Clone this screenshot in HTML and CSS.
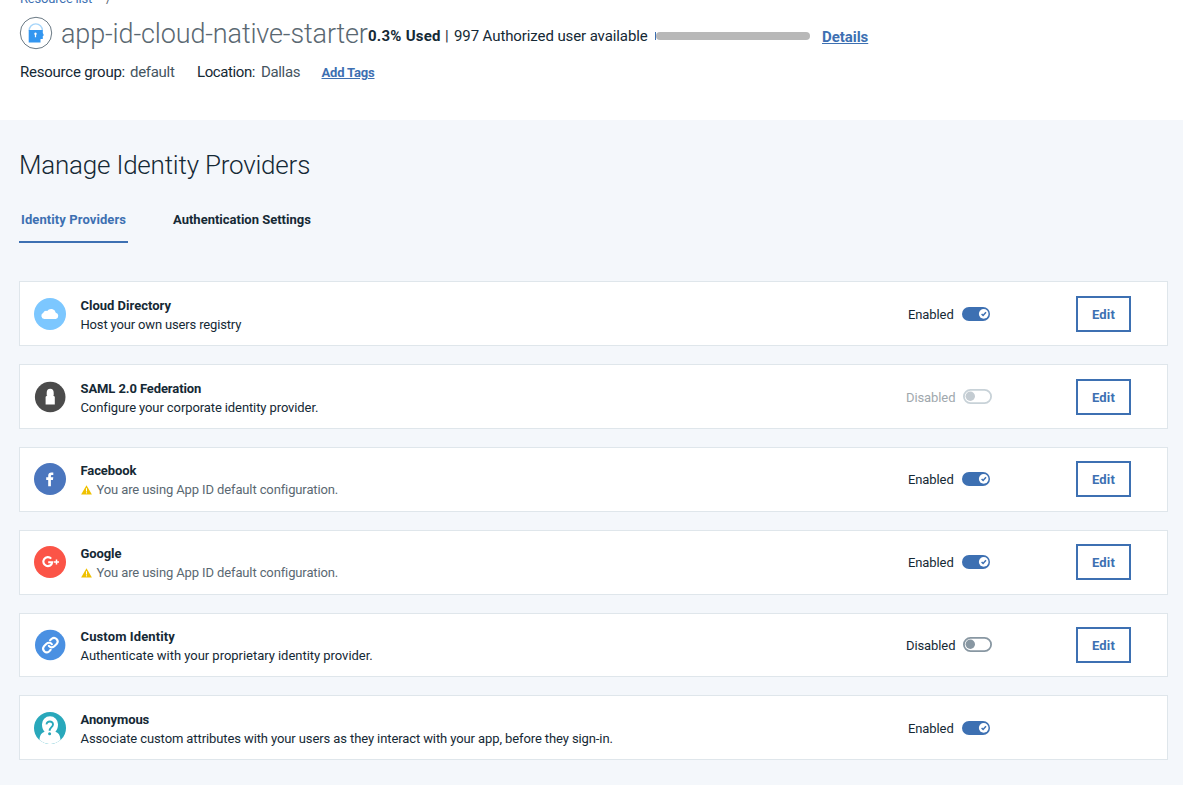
FILE: index.html
```html
<!DOCTYPE html>
<html lang="en">
<head>
<meta charset="utf-8">
<title>Manage Identity Providers</title>
<link rel="stylesheet" href="styles.css">
</head>
<body>
<header class="header">
  <nav class="breadcrumb"><a class="crumb">Resource list</a><span class="slash">/</span></nav>
  <div class="title-row">
    <svg class="app-icon" width="34" height="34" viewBox="0 0 34 34">
      <circle cx="17" cy="17" r="15.7" fill="#fff" stroke="#6b7a85" stroke-width="1"/>
      <path d="M10.2 14.5a6.6 6.6 0 0 1 13.200 0" fill="none" stroke="#a6d5fa" stroke-width="1.400"/>
      <path d="M9.700 14H23.800V17L24.900 19.300L23.800 20V23H21.500V26.500H9.700Z" fill="#3396f0"/>
      <path d="M16.500 16.600a1.300 1.300 0 0 1 .6 2.400V21.200H15.900V19a1.300 1.300 0 0 1 .6-2.400Z" fill="#fff"/>
    </svg>
    <h1 class="app-name">app-id-cloud-native-starter</h1>
    <div class="usage"><strong class="used">0.3% Used</strong><span class="bar">|</span><span class="available">997 Authorized user available</span></div>
    <div class="meter"><span class="meter-track"></span></div>
    <a class="details">Details</a>
  </div>
  <div class="meta">
    <span class="meta-label group-label">Resource group:</span><span class="meta-value group-value">default</span>
    <span class="meta-label location-label">Location:</span><span class="meta-value location-value">Dallas</span>
    <a class="add-tags">Add Tags</a>
  </div>
</header>
<main class="main">
  <h2 class="heading">Manage Identity Providers</h2>
  <nav class="tabs"><a class="tab tab-active">Identity Providers</a><a class="tab">Authentication Settings</a></nav>
  <section class="cards">
    <article class="card">
      <svg class="icon" viewBox="0 0 32 32"><circle cx="16" cy="16" r="16" fill="#7cc7ff"/><path d="M10.300 21A3.300 3.300 0 0 1 9.300 14.700A3.200 3.200 0 0 1 13.200 13A4.800 4.800 0 0 1 21.800 14.800A3.200 3.200 0 0 1 21.900 21Z" fill="#fff"/></svg>
      <div class="info"><h3 class="name">Cloud Directory</h3><p class="desc tight">Host your own users registry</p></div>
      <div class="status on"><span class="label">Enabled</span><svg class="toggle" width="28" height="14" viewBox="0 0 28 14"><rect width="28" height="14" rx="7" fill="#3d70b2"/><circle cx="21.700" cy="6.900" r="4.800" fill="#fff"/><path d="M19.600 7L21.100 8.500L24 5.300" fill="none" stroke="#3d70b2" stroke-width="1.500"/></svg></div>
      <button class="edit">Edit</button>
    </article>
    <article class="card">
      <svg class="icon" viewBox="0 0 32 32"><circle cx="16.200" cy="16" r="15.300" fill="#4b4b4b"/><path d="M12.700 11.800a3.500 4 0 0 1 7 0V14.300H19L20.800 15.700V23.500H11.600V15.700L13.400 14.300H12.700Z" fill="#fff"/></svg>
      <div class="info"><h3 class="name snug">SAML 2.0 Federation</h3><p class="desc">Configure your corporate identity provider.</p></div>
      <div class="status muted"><span class="label">Disabled</span><svg class="toggle" width="29" height="15" viewBox="0 0 29 15"><rect x=".9" y=".9" width="27.200" height="13.200" rx="6.600" fill="#fff" stroke="#c8d2d8" stroke-width="1.800"/><circle cx="7.300" cy="7.300" r="4.700" fill="#c4ccd2"/></svg></div>
      <button class="edit">Edit</button>
    </article>
    <article class="card">
      <svg class="icon" viewBox="0 0 32 32"><circle cx="16" cy="16" r="16" fill="#4b76be"/><path d="M14.200 23.300V16.900H12.200V14.200H14.200V12.500C14.200 10.200 15.600 9.400 17.200 9.400H19.300V11.900H18C17.200 11.900 16.900 12.300 16.900 13V14.200H19.300L18.900 16.900H16.900V23.300Z" fill="#fff"/></svg>
      <div class="info"><h3 class="name snug">Facebook</h3><p class="desc warning"><svg class="warn" width="11" height="10" viewBox="0 0 11 10"><path d="M5.500 0.300L10.900 9.500H0.100Z" fill="#efc100"/><path d="M5.500 3.200V6.500M5.500 7.300V8.400" stroke="#fff" stroke-width="1"/></svg>You are using App ID default configuration.</p></div>
      <div class="status on"><span class="label">Enabled</span><svg class="toggle" width="28" height="14" viewBox="0 0 28 14"><rect width="28" height="14" rx="7" fill="#3d70b2"/><circle cx="21.700" cy="6.900" r="4.800" fill="#fff"/><path d="M19.600 7L21.100 8.500L24 5.300" fill="none" stroke="#3d70b2" stroke-width="1.500"/></svg></div>
      <button class="edit">Edit</button>
    </article>
    <article class="card">
      <svg class="icon" viewBox="0 0 32 32"><circle cx="16" cy="16" r="16" fill="#fb5447"/><path d="M17.200 12.600A4.500 4.500 0 1 0 18.300 16.200H14.200" fill="none" stroke="#fff" stroke-width="2.100"/><path d="M22.500 13.500V18.500M20 16H25" stroke="#fff" stroke-width="1.500"/></svg>
      <div class="info"><h3 class="name snug">Google</h3><p class="desc warning"><svg class="warn" width="11" height="10" viewBox="0 0 11 10"><path d="M5.500 0.300L10.900 9.500H0.100Z" fill="#efc100"/><path d="M5.500 3.200V6.500M5.500 7.300V8.400" stroke="#fff" stroke-width="1"/></svg>You are using App ID default configuration.</p></div>
      <div class="status on"><span class="label">Enabled</span><svg class="toggle" width="28" height="14" viewBox="0 0 28 14"><rect width="28" height="14" rx="7" fill="#3d70b2"/><circle cx="21.700" cy="6.900" r="4.800" fill="#fff"/><path d="M19.600 7L21.100 8.500L24 5.300" fill="none" stroke="#3d70b2" stroke-width="1.500"/></svg></div>
      <button class="edit">Edit</button>
    </article>
    <article class="card">
      <svg class="icon" viewBox="0 0 32 32"><circle cx="16.200" cy="16" r="15.200" fill="#4a90e2"/><g transform="translate(8.200 7.700) scale(.7)" fill="none" stroke="#fff" stroke-width="3" stroke-linecap="round" stroke-linejoin="round"><path d="M9.500 13.200a5.200 5.200 0 0 0 7.800.6l3.600-3.600a5.200 5.200 0 0 0-7.300-7.300l-2.300 2.300"/><path d="M13.900 10.800a5.200 5.200 0 0 0-7.800-.6l-3.600 3.600a5.200 5.200 0 0 0 7.300 7.300l2.300-2.300"/></g></svg>
      <div class="info"><h3 class="name wide">Custom Identity</h3><p class="desc even">Authenticate with your proprietary identity provider.</p></div>
      <div class="status"><span class="label">Disabled</span><svg class="toggle" width="29" height="15" viewBox="0 0 29 15"><rect x=".9" y=".9" width="27.200" height="13.200" rx="6.600" fill="#fff" stroke="#8897a2" stroke-width="1.800"/><circle cx="7.300" cy="7.300" r="4.700" fill="#8897a2"/></svg></div>
      <button class="edit">Edit</button>
    </article>
    <article class="card">
      <svg class="icon" viewBox="0 0 32 32"><circle cx="16" cy="16" r="16" fill="#29a8bb"/><path d="M16 4.300a8 8 0 0 1 8 8.400c0 3.200-1.300 5.600-2.600 7 2.900.8 4.900 3.300 5.100 8.400A16 16 0 0 1 5.500 28.100C5.700 23 7.700 20.500 10.600 19.700c-1.300-1.400-2.600-3.800-2.600-7A8 8 0 0 1 16 4.300Z" fill="#fff"/><path d="M12.600 12.400C12.400 8.500 19.200 8.400 19 12.500C18.800 15.200 15.700 15.300 15.600 18.800" fill="none" stroke="#29a8bb" stroke-width="1.900"/><circle cx="15.600" cy="21.800" r="1.500" fill="#29a8bb"/></svg>
      <div class="info"><h3 class="name snug">Anonymous</h3><p class="desc">Associate custom attributes with your users as they interact with your app, before they sign-in.</p></div>
      <div class="status on"><span class="label">Enabled</span><svg class="toggle" width="28" height="14" viewBox="0 0 28 14"><rect width="28" height="14" rx="7" fill="#3d70b2"/><circle cx="21.700" cy="6.900" r="4.800" fill="#fff"/><path d="M19.600 7L21.100 8.500L24 5.300" fill="none" stroke="#3d70b2" stroke-width="1.500"/></svg></div>
    </article>
  </section>
</main>
</body>
</html>
```
FILE: styles.css
```css
* { box-sizing: border-box; }
html, body { margin: 0; height: 785px; overflow: hidden; }
body { font-family: Roboto, "Liberation Sans", sans-serif; font-size: 13px; color: #152935; background: #f4f7fb; display: flex; flex-direction: column; }
h1, h2, h3, p { margin: 0; }

.header { height: 120px; background: #fff; padding-left: 20px; overflow: hidden; flex: none; }
.breadcrumb { display: flex; gap: 14px; height: 18px; line-height: 18px; margin-top: -10px; color: #5a6872; }
.crumb { color: #3d70b2; letter-spacing: -0.2px; }
.title-row { display: flex; align-items: center; height: 34px; margin: 8px 0 0 -1px; }
.app-icon { flex: none; }
.app-name { width: 307px; margin-left: 8px; padding-top: 2px; font-size: 27px; line-height: 34px; font-weight: 300; letter-spacing: -0.14px; color: #5a6872; white-space: nowrap; }
.usage { display: flex; width: 287px; padding-top: 6px; font-size: 15px; line-height: 20px; white-space: nowrap; }
.used { width: 77px; letter-spacing: 0.25px; }
.bar { width: 9px; }
.available { letter-spacing: -0.1px; }
.meter { width: 155px; height: 8px; margin-top: 6px; border-left: 1px solid #3d70b2; }
.meter-track { display: block; height: 8px; border-radius: 4px; background: #b8b8b8; }
.details { margin: 7px 0 0 12px; font-size: 15px; line-height: 20px; font-weight: 700; letter-spacing: -0.05px; color: #3d70b2; text-decoration: underline; }
.meta { display: flex; height: 20px; margin-top: 12px; font-size: 15px; line-height: 20px; white-space: nowrap; }
.group-label { width: 110px; letter-spacing: -0.23px; }
.group-value { width: 67px; letter-spacing: -0.3px; }
.location-label { width: 64px; letter-spacing: -0.4px; }
.location-value { width: 60.500px; letter-spacing: -0.35px; }
.meta-value { color: #45555f; }
.add-tags { font-size: 13px; font-weight: 700; letter-spacing: -0.18px; color: #3d70b2; text-decoration: underline; line-height: 21px; }

.main { padding: 28px 15px 0 19px; }
.heading { height: 36px; line-height: 35px; font-size: 26px; font-weight: 300; letter-spacing: -0.21px; }
.tabs { display: flex; gap: 44px; height: 41px; margin-top: 18px; }
.tab { height: 41px; padding: 8px 1px 0 1px; line-height: 20px; font-weight: 700; }
.tab-active { width: 109px; padding-left: 2px; color: #3d70b2; letter-spacing: 0.09px; border-bottom: 2px solid #3d70b2; }

.cards { display: flex; flex-direction: column; gap: 18px; padding-top: 38.400px; }
.card { display: flex; align-items: center; height: 64.800px; padding: 0 36px 0 14px; background: #fff; border: 1px solid #dfe6eb; }
.icon { flex: none; width: 32px; height: 32px; }
.info { flex: 1; padding: 2.100px 0 0 14.500px; white-space: nowrap; }
.name { font-size: 13px; line-height: 19px; font-weight: 700; }
.snug { letter-spacing: -0.1px; }
.wide { letter-spacing: 0.12px; }
.desc { line-height: 19px; letter-spacing: -0.1px; }
.tight { letter-spacing: -0.16px; }
.even { letter-spacing: -0.03px; }
.warning { display: flex; align-items: center; gap: 5px; letter-spacing: -0.12px; color: #5a6872; }
.status { display: flex; align-items: center; width: 170px; gap: 7px; flex: none; }
.label { width: 50px; padding-top: 1px; line-height: 19px; letter-spacing: -0.1px; }
.on { padding-left: 2px; }
.on .label { width: 47px; }
.status:last-child { margin-right: 55px; }
.muted { color: #a0a8ad; }
.edit { width: 55px; height: 36px; padding: 1px 0 0; border: 2px solid #3d70b2; background: #fff; color: #3d70b2; font: 700 13px Roboto, "Liberation Sans", sans-serif; letter-spacing: 0.15px; flex: none; }
```
